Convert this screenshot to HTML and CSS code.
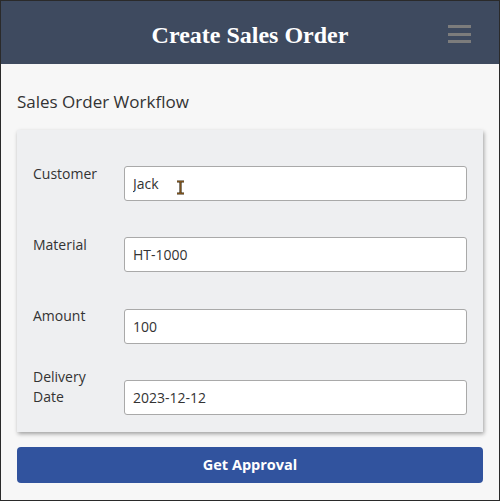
FILE: index.html
```html
<!DOCTYPE html>
<html>
<head>
<meta charset="utf-8">
<link rel="stylesheet" href="styles.css">
</head>
<body>
<div class="frame">
  <header class="topbar">
    <h1 class="title">Create Sales Order</h1>
    <div class="menu" aria-label="menu"><span></span><span></span><span></span></div>
  </header>
  <main class="content">
    <h2 class="subtitle">Sales Order Workflow</h2>
    <section class="card">
      <div class="row">
        <label class="label">Customer</label>
        <div class="field">
          <input class="input" type="text" value="Jack">
          <svg class="cursor" width="9" height="15" viewBox="0 0 9 15"><path d="M1 1.5h7M4.5 1.5v12M1 13.5h7" stroke="#3a2a10" stroke-width="2.2" fill="none"/><path d="M1 1.5h7M4.5 1.5v12M1 13.5h7" stroke="#8a5a20" stroke-width="0.8" fill="none"/></svg>
        </div>
      </div>
      <div class="row">
        <label class="label">Material</label>
        <div class="field"><input class="input" type="text" value="HT-1000"></div>
      </div>
      <div class="row">
        <label class="label">Amount</label>
        <div class="field"><input class="input" type="text" value="100"></div>
      </div>
      <div class="row">
        <label class="label narrow">Delivery Date</label>
        <div class="field"><input class="input" type="text" value="2023-12-12"></div>
      </div>
    </section>
    <button class="btn">Get Approval</button>
  </main>
</div>
</body>
</html>
```
FILE: styles.css
```css
html, body {
  margin: 0;
  padding: 0;
}
body {
  width: 500px;
  height: 501px;
  overflow: hidden;
  background: #f7f7f7;
}
.frame {
  box-sizing: border-box;
  width: 500px;
  height: 501px;
  border: 1px solid #2a2a2a;
  background: #f7f7f7;
  font-family: "Open Sans", "Noto Sans", sans-serif;
  color: #333;
}
.topbar {
  height: 63px;
  background: #3e4a5f;
  display: flex;
  align-items: center;
  justify-content: center;
  position: relative;
}
.title {
  margin: 0;
  font-family: "Liberation Serif", serif;
  font-weight: bold;
  font-size: 24px;
  color: #ffffff;
  padding-top: 6px;
}
.menu {
  position: absolute;
  right: 28px;
  top: 24px;
  width: 23px;
  display: flex;
  flex-direction: column;
  gap: 4.5px;
}
.menu span {
  display: block;
  height: 3px;
  background: #7c7c7c;
}
.content {
  padding: 0 16px 0 16px;
}
.subtitle {
  margin: 0;
  padding: 26px 0 17px;
  font-weight: normal;
  font-size: 17px;
  line-height: 23px;
  color: #333;
}
.card {
  background: #eeeff1;
  box-shadow: 1px 2px 4px rgba(0,0,0,0.35);
  padding: 36px 16px 17px;
  display: flex;
  flex-direction: column;
  gap: 36.33px;
}
.row {
  display: flex;
  align-items: center;
}
.label {
  width: 91px;
  flex: none;
  font-size: 14px;
  line-height: 20px;
  margin-top: -20px;
  color: #333;
}
.narrow {
  padding-right: 30px;
  box-sizing: border-box;
}
.field {
  flex: 1;
  position: relative;
}
.input {
  display: block;
  box-sizing: border-box;
  width: 100%;
  height: 35px;
  border: 1px solid #a9a9a9;
  border-radius: 3px;
  background: #fff;
  padding: 0 8px;
  font-family: "Open Sans", "Noto Sans", sans-serif;
  font-size: 14px;
  color: #333;
  outline: none;
}
.cursor {
  position: absolute;
  left: 52px;
  top: 14px;
}
.btn {
  display: block;
  width: 100%;
  margin-top: 15px;
  height: 36px;
  border: none;
  border-radius: 4px;
  background: #31539e;
  color: #fff;
  font-family: "Open Sans", "Noto Sans", sans-serif;
  font-weight: bold;
  font-size: 14.5px;
}
```
